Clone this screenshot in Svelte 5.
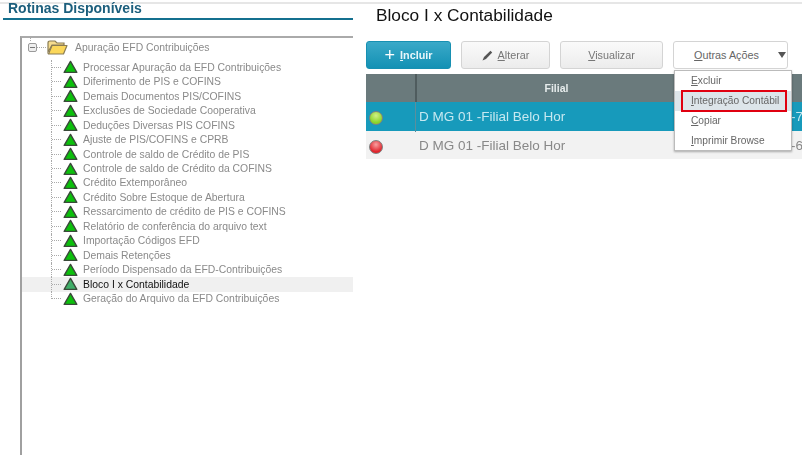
<script>
  const rotinas = [
    "Processar Apuração da EFD Contribuições",
    "Diferimento de PIS e COFINS",
    "Demais Documentos PIS/COFINS",
    "Exclusões de Sociedade Cooperativa",
    "Deduções Diversas PIS COFINS",
    "Ajuste de PIS/COFINS e CPRB",
    "Controle de saldo de Crédito de PIS",
    "Controle de saldo de Crédito da COFINS",
    "Crédito Extemporâneo",
    "Crédito Sobre Estoque de Abertura",
    "Ressarcimento de crédito de PIS e COFINS",
    "Relatório de conferência do arquivo text",
    "Importação Códigos EFD",
    "Demais Retenções",
    "Período Dispensado da EFD-Contribuições",
    "Bloco I x Contabilidade",
    "Geração do Arquivo da EFD Contribuições",
  ];
  const selected = "Bloco I x Contabilidade";

  const linhas = [
    { status: "green", filial: "D MG 01 -Filial Belo Hor", resto: "1-7", active: true },
    { status: "red", filial: "D MG 01 -Filial Belo Hor", resto: "0-6", active: false },
  ];
</script>

<div class="page">
  <aside class="left">
    <h2>Rotinas Disponíveis</h2>
    <div class="tree">
      <div class="root-stem"></div>
      <div class="root">
        <span class="toggle"><span></span></span>
        <span class="root-dash"></span>
        <svg class="folder" width="21" height="15" viewBox="0 0 21 15">
          <path d="M1 3 Q1 1 3 1 H8 L10 3 H17 V5 H5 L1 12 Z" fill="#f6dc8e" stroke="#8a7c54" stroke-width="1.2" />
          <path d="M1.5 14 L5 5.5 H20 L16.5 14 Z" fill="#fbd75a" stroke="#8a7c54" stroke-width="1.2" stroke-linejoin="round" />
        </svg>
        <span class="root-label">Apuração EFD Contribuições</span>
      </div>
      <ul>
        {#each rotinas as rotina, i}
          <li class:sel={rotina === selected}>
            <div class="branch" class:last={i === rotinas.length - 1}>
              <span class="stub"></span>
              <svg class="tri" width="15" height="14" viewBox="0 0 15 14">
                <path d="M7.5 1.4 L13.8 12.4 H1.2 Z" fill={rotina === selected ? "#3fae68" : "#0cc00c"} stroke="#3a4a3a" stroke-width="1.4" stroke-linejoin="round" />
              </svg>
              <span class="label">{rotina}</span>
            </div>
          </li>
        {/each}
      </ul>
    </div>
  </aside>

  <main class="right">
    <h1>Bloco I x Contabilidade</h1>
    <div class="actions">
      <button class="primary incluir"><span class="plus">+</span> <span><u>I</u>ncluir</span></button>
      <button class="alterar">
        <svg width="11" height="11" viewBox="0 0 11 11"><path d="M0.5 10.5 L2 7 L8.5 0.8 L10.2 2.5 L4 9 Z" fill="#555" /></svg>
        <span><u>A</u>lterar</span>
      </button>
      <button class="visualizar"><span><u>V</u>isualizar</span></button>
      <div class="more">
        <button class="outras"><span><u>O</u>utras Ações</span><i class="caret"></i></button>
        <div class="menu">
          <div class="item"><u>E</u>xcluir</div>
          <div class="item hot"><u>I</u>ntegração Contábil</div>
          <div class="item"><u>C</u>opiar</div>
          <div class="item"><u>I</u>mprimir Browse</div>
        </div>
      </div>
    </div>

    <div class="grid">
      <div class="head">
        <div class="c-status"></div>
        <div class="c-filial">Filial</div>
        <div class="c-rest"></div>
      </div>
      {#each linhas as l}
        <div class="row" class:active={l.active}>
          <div class="c-status"><span class="dot {l.status}"></span></div>
          <div class="c-filial">{l.filial}</div>
          <div class="c-rest">{l.resto}</div>
        </div>
      {/each}
    </div>
  </main>
</div>

<style>
  :global(body) {
    margin: 0;
    background: #fff;
  }
  .page {
    width: 802px;
    height: 455px;
    overflow: hidden;
    display: flex;
    box-sizing: border-box;
    padding-top: 4px;
    font-family: "Liberation Sans", Arial, sans-serif;
    filter: blur(0.45px);
    background: linear-gradient(#e6e6e6, #e6e6e6) 0 2px / 100% 2px no-repeat;
  }
  .left {
    width: 350px;
    margin-left: 3px;
    margin-top: -2px;
    flex: none;
    display: flex;
    flex-direction: column;
  }
  h2 {
    margin: 0;
    height: 16px;
    padding-left: 5px;
    border-bottom: 2px solid #14708f;
    font-size: 14px;
    line-height: 13px;
    color: #1b5e7c;
    font-weight: bold;
  }
  .tree {
    flex: 1;
    margin: 16px 0 0 17px;
    border-top: 2px solid #aaa;
    border-left: 2px solid #a0a0a0;
    color: #8a8a8a;
  }
  .root-stem {
    height: 3px;
    margin-left: 8px;
    border-left: 1px dotted #aaa;
  }
  .root {
    display: flex;
    align-items: center;
    height: 13px;
    padding-left: 6px;
  }
  .toggle {
    width: 9px;
    height: 9px;
    box-sizing: border-box;
    border: 1px solid #9a9a9a;
    border-radius: 2px;
    display: flex;
    align-items: center;
    justify-content: center;
    background: #eee;
  }
  .toggle span {
    width: 5px;
    height: 1px;
    background: #777;
  }
  .root-dash {
    width: 9px;
    border-top: 1px dotted #aaa;
  }
  .folder {
    margin-left: 1px;
  }
  .root-label {
    margin-left: 7px;
    font-size: 10.4px;
  }
  ul {
    list-style: none;
    margin: 6px 0 0;
    padding: 0;
  }
  li {
    height: 14.47px;
    padding-left: 29px;
  }
  li.sel {
    background: #f0f0f0;
  }
  li.sel .label {
    color: #111;
  }
  .branch {
    height: 100%;
    display: flex;
    align-items: center;
    border-left: 1px dotted #aaa;
  }
  .branch.last {
    border-left-color: transparent;
  }
  .stub {
    width: 9px;
    border-top: 1px dotted #aaa;
  }
  .branch.last .stub {
    height: 7px;
    margin: -7px 0 0 -1px;
    border-top: 0;
    border-left: 1px dotted #aaa;
    border-bottom: 1px dotted #aaa;
  }
  .tri {
    margin-left: 2px;
    flex: none;
  }
  .label {
    margin-left: 5px;
    font-size: 10.4px;
    white-space: nowrap;
  }
  .right {
    flex: 1;
    min-width: 0;
    margin-left: 13px;
  }
  h1 {
    margin: 0 0 0 10px;
    height: 22px;
    font-size: 17.3px;
    line-height: 22px;
    font-weight: normal;
    color: #111;
  }
  .actions {
    display: flex;
    gap: 10px;
    margin-top: 15px;
    height: 28px;
  }
  button {
    box-sizing: border-box;
    height: 28px;
    padding: 0;
    display: flex;
    align-items: center;
    justify-content: center;
    gap: 5px;
    border: 1px solid #d4d4d4;
    border-radius: 3px;
    background: linear-gradient(#fafafa, #ececec);
    font: 10.8px "Liberation Sans", Arial, sans-serif;
    color: #777;
  }
  .primary {
    border-color: #1790b2;
    background: linear-gradient(#3aa9c8, #1391b4);
    color: #e8f6fa;
    font-weight: bold;
  }
  .plus {
    font-size: 18px;
    line-height: 17px;
    font-weight: normal;
    color: #fff;
  }
  .incluir { width: 85px; }
  .alterar { width: 89px; }
  .visualizar { width: 103px; }
  .more {
    position: relative;
    width: 115px;
  }
  .outras {
    width: 100%;
    background: #fff;
    padding-right: 8px;
    color: #666;
  }
  .caret {
    position: absolute;
    right: 2px;
    top: 11px;
    border-left: 4px solid transparent;
    border-right: 4px solid transparent;
    border-top: 6px solid #555;
  }
  .menu {
    position: absolute;
    z-index: 2;
    top: 29px;
    left: 1px;
    width: 118px;
    height: 81px;
    box-sizing: border-box;
    background: #fff;
    border: 1px solid #bbb;
    box-shadow: 0 1px 2px rgba(0, 0, 0, 0.3);
    font-size: 10.2px;
    color: #666;
  }
  .item {
    height: 20px;
    line-height: 19px;
    padding-left: 16px;
  }
  .item.hot {
    position: relative;
    background: #dde5ea;
  }
  .item.hot::after {
    content: "";
    position: absolute;
    left: 6px;
    right: 4px;
    top: -1px;
    bottom: -1px;
    border: 2px solid #e00010;
  }
  .grid {
    margin-top: 5px;
  }
  .head,
  .row {
    display: grid;
    grid-template-columns: 49px 281px 1fr;
    align-items: stretch;
  }
  .head {
    height: 28px;
    background: #6a7a7c;
    color: #e6ecec;
    font-size: 10.5px;
    font-weight: bold;
  }
  .head .c-filial {
    text-align: center;
    line-height: 28px;
    border-left: 2px solid #4f5c5e;
  }
  .row {
    height: 28.5px;
    background: #f2f2f2;
    color: #888;
    font-size: 13.5px;
    line-height: 30px;
  }
  .row.active {
    background: #179abb;
    color: #c6e8f0;
  }
  .row .c-filial {
    padding-left: 4px;
    white-space: nowrap;
  }
  .row.active .c-filial {
    border-left: 1px solid #5c8e9c;
    padding-left: 3px;
  }
  .c-status {
    display: flex;
    align-items: center;
    padding: 2px 0 0 3px;
  }
  .c-rest {
    white-space: nowrap;
    text-align: right;
    margin-right: -1px;
  }
  .dot {
    width: 14px;
    height: 14px;
    box-sizing: border-box;
    border-radius: 50%;
    border: 1px solid #808080;
  }
  .dot.green {
    background: radial-gradient(circle at 50% 30%, #d0f088, #8ad426 70%);
  }
  .dot.red {
    background: radial-gradient(circle at 50% 30%, #f8a0a0, #e0242c 70%);
  }
</style>
